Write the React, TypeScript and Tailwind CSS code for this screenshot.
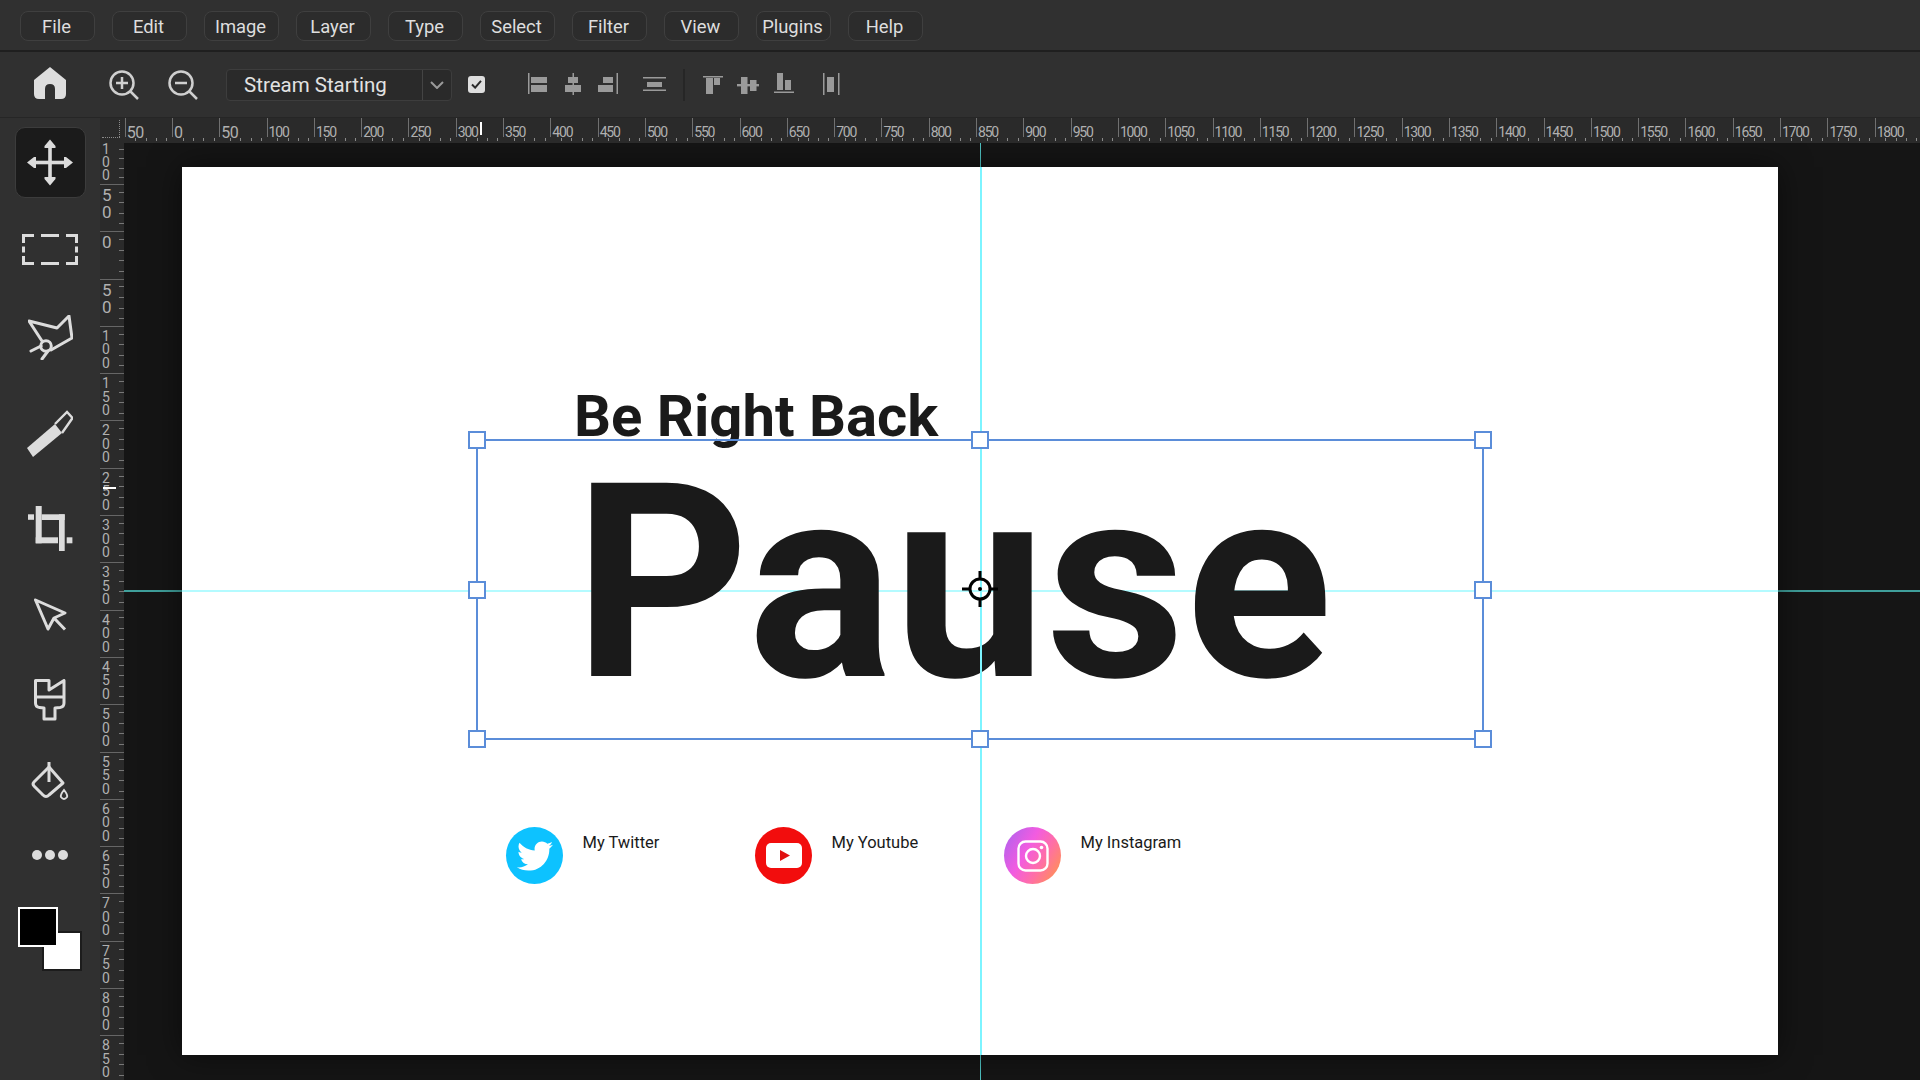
import { FaTwitter } from "react-icons/fa";

const menus = ["File", "Edit", "Image", "Layer", "Type", "Select", "Filter", "View", "Plugins", "Help"];
const topLabels = Array.from({ length: 38 }, (_, i) => (i === 0 ? 50 : (i - 1) * 50));
const sideLabels = [100, 50, 0, ...Array.from({ length: 17 }, (_, i) => (i + 1) * 50)];

const handles = [
  "left-[-1px] top-[-1px]",
  "left-1/2 top-[-1px]",
  "left-[calc(100%+1px)] top-[-1px]",
  "left-[-1px] top-1/2",
  "left-[calc(100%+1px)] top-1/2",
  "left-[-1px] top-[calc(100%+1px)]",
  "left-1/2 top-[calc(100%+1px)]",
  "left-[calc(100%+1px)] top-[calc(100%+1px)]",
];

function Bars({ className, children }: { className: string; children: React.ReactNode }) {
  return (
    <svg viewBox="0 0 24 24" className={`h-[24px] w-[24px] shrink-0 ${className}`} fill="#9a9a9a">
      {children}
    </svg>
  );
}

function MoveIcon() {
  return (
    <svg viewBox="0 0 46 47" className="h-[47px] w-[46px]" fill="#dcdcdc">
      <rect x="21.2" y="6" width="3.6" height="35" />
      <rect x="6" y="21.7" width="34" height="3.6" />
      <path d="M23 0.5 L28.5 7 V9 H17.5 V7 Z M23 46.5 L28.5 40 V38 H17.5 V40 Z M0 23.5 L7 18 H9 V29 H7 Z M46 23.5 L39 18 H37 V29 H39 Z" />
    </svg>
  );
}

function MarqueeIcon() {
  return (
    <svg viewBox="0 0 56 31" className="h-[31px] w-[56px]" fill="none" stroke="#dcdcdc" strokeWidth="3">
      <path d="M1.5 9V1.5H12M19 1.5H37M44 1.5H54.5V9M1.5 12.5V18.5M54.5 12.5V18.5M1.5 22V29.5H12M19 29.5H37M44 29.5H54.5V22" />
    </svg>
  );
}

function PenIcon() {
  return (
    <svg viewBox="0 0 45 45" className="h-[45px] w-[45px]" fill="none" stroke="#dcdcdc" strokeWidth="3">
      <path d="M14 26 L1 6 L29 13 L41 1 L44 23 L23 35 M3 36 L13 31 M14 44 L20 36" strokeLinejoin="round" strokeLinecap="round" />
      <circle cx="18" cy="31" r="5.3" />
    </svg>
  );
}

function BrushIcon() {
  return (
    <svg viewBox="0 0 46 47" className="h-[47px] w-[46px]">
      <path d="M0 38 L6 47 L35 23 L28 14 Z" fill="#dcdcdc" />
      <path d="M28 14 L40 2 L45.5 8 L35 23" fill="none" stroke="#dcdcdc" strokeWidth="2.4" />
    </svg>
  );
}

function CropIcon() {
  return (
    <svg viewBox="0 0 45 45" className="h-[45px] w-[45px]" fill="#dcdcdc">
      <rect x="0" y="8.3" width="6" height="5.5" />
      <rect x="7.7" y="0" width="6" height="37.3" />
      <rect x="7.7" y="31.3" width="22.3" height="6" />
      <rect x="13.7" y="8.3" width="23" height="5.7" />
      <rect x="31" y="8.3" width="5.7" height="36.7" />
      <rect x="38.7" y="31.3" width="5.7" height="6" />
    </svg>
  );
}

function ArrowIcon() {
  return (
    <svg viewBox="0 0 33 33" className="h-[33px] w-[33px]" fill="none" stroke="#dcdcdc" strokeWidth="3">
      <path d="M1.5 2 L31 15 L20 20 L14 31 Z M20 20 L31 31.5" strokeLinejoin="round" />
    </svg>
  );
}

function PaintIcon() {
  return (
    <svg viewBox="0 0 32 42" className="h-[42px] w-[32px]" fill="none" stroke="#dcdcdc" strokeWidth="3">
      <path d="M1.5 1.5 H15 V11 L30 1.5 V24 Q30 28 26 28.5 L21 29 V40 H10 V29 L5.5 28.5 Q1.5 28 1.5 24 Z M1.5 18 H30" strokeLinejoin="round" />
    </svg>
  );
}

function BucketIcon() {
  return (
    <svg viewBox="10 10 40 42" className="h-[42px] w-[40px]" fill="none" stroke="#dcdcdc" strokeWidth="3">
      <path d="M29 17 L14 32 Q12 34 14 36 L23 45 Q26 48 29 45 L43 33 L29 17 Z" strokeLinejoin="round" />
      <path d="M29 12 V32" />
      <path d="M44 40 Q48 45 47 47 Q44 51 41 47 Q40 45 44 40 Z" strokeWidth="2" />
    </svg>
  );
}

function Social({ name, children }: { name: string; children: React.ReactNode }) {
  return (
    <div className="flex w-[249px] items-start gap-[19.5px]">
      {children}
      <span className="mt-[4px] text-[16.5px] leading-[24px] text-[#1a1a1a]">{name}</span>
    </div>
  );
}

export default function App() {
  return (
    <div className="flex h-screen w-screen flex-col overflow-hidden bg-[#303030] font-['Roboto',sans-serif]">
      <div className="flex h-[52px] shrink-0 items-start gap-[17px] border-b-2 border-[#1f1f1f] bg-[#303030] pl-[20px] pt-[11px]">
        {menus.map((m) => (
          <div
            key={m}
            className="flex h-[30px] w-[75px] items-center justify-center rounded-[8px] border border-[#3f3f3f] bg-[#2c2c2c] pr-[2px] pt-[2px] text-[18.4px] text-[#dedede]"
          >
            {m}
          </div>
        ))}
      </div>

      <div className="flex h-[66px] shrink-0 items-center border-b border-[#262626] bg-[#303030]">
        <svg viewBox="0 0 32 32" className="-mt-[3px] ml-[34px] h-[32px] w-[32px] shrink-0" fill="#dedede">
          <path d="M16 0 L32 13 V27 Q32 32 27 32 H21 V22 Q21 17 16 17 Q11 17 11 22 V32 H5 Q0 32 0 27 V13 Z" />
        </svg>
        <svg viewBox="0 0 32 32" className="ml-[42px] h-[32px] w-[32px] shrink-0" fill="none" stroke="#cfcfcf" strokeWidth="2.5">
          <circle cx="14" cy="14" r="11.5" />
          <path d="M22.5 22.5 L30 30 M8 14 H20 M14 8 V20" />
        </svg>
        <svg viewBox="0 0 32 32" className="ml-[27px] h-[32px] w-[32px] shrink-0" fill="none" stroke="#cfcfcf" strokeWidth="2.5">
          <circle cx="14" cy="14" r="11.5" />
          <path d="M22.5 22.5 L30 30 M8 14 H20" />
        </svg>
        <div className="ml-[27px] flex h-[32px] w-[226px] shrink-0 items-center rounded-[4px] border border-[#3d3d3d] bg-[#2a2a2a]">
          <span className="w-[195px] pl-[17px] pt-px text-[20.5px] text-[#e2e2e2]">Stream Starting</span>
          <div className="flex h-full flex-1 items-center justify-center border-l border-[#444]">
            <svg viewBox="0 0 14 8" className="h-[8px] w-[14px]" fill="none" stroke="#9a9a9a" strokeWidth="2">
              <path d="M1 1 L7 7 L13 1" />
            </svg>
          </div>
        </div>
        <div className="ml-[16px] flex h-[17px] w-[17px] shrink-0 items-center justify-center rounded-[3px] bg-[#dedede]">
          <svg viewBox="0 0 12 10" className="h-[9px] w-[11px]" fill="none" stroke="#2a2a2a" strokeWidth="2.2">
            <path d="M1 5 L4.5 8.5 L11 1" />
          </svg>
        </div>
        <Bars className="ml-[41px]">
          <rect x="2" y="0" width="1.5" height="21" />
          <rect x="5" y="4" width="16" height="6" />
          <rect x="5" y="12" width="16" height="7" />
        </Bars>
        <Bars className="ml-[11px]">
          <rect x="11.5" y="0" width="1.5" height="22" />
          <rect x="7" y="4" width="10" height="6" />
          <rect x="4" y="12" width="16" height="7" />
        </Bars>
        <Bars className="ml-[11px]">
          <rect x="20.5" y="0" width="1.5" height="21" />
          <rect x="7" y="4" width="10" height="6" />
          <rect x="2" y="12" width="15" height="7" />
        </Bars>
        <Bars className="ml-[22px]">
          <rect x="1" y="4" width="23" height="1.5" />
          <rect x="5" y="9" width="15" height="5" />
          <rect x="1" y="16.5" width="23" height="1.5" />
        </Bars>
        <div className="ml-[17px] h-[32px] w-[2px] shrink-0 bg-[#262626]" />
        <Bars className="ml-[16px]">
          <rect x="2" y="3" width="20" height="1.5" />
          <rect x="5" y="5" width="7" height="16" />
          <rect x="13" y="5" width="6" height="7" />
        </Bars>
        <Bars className="ml-[11px]">
          <rect x="1" y="11" width="22" height="2.4" />
          <rect x="5" y="4" width="6.5" height="17" />
          <rect x="14" y="7" width="6.5" height="11" />
        </Bars>
        <Bars className="ml-[12px]">
          <rect x="2" y="18.5" width="20" height="1.5" />
          <rect x="5" y="0" width="6" height="17" />
          <rect x="13" y="7" width="6" height="10" />
        </Bars>
        <Bars className="ml-[23px]">
          <rect x="4" y="0" width="1.5" height="22" />
          <rect x="19" y="0" width="1.5" height="22" />
          <rect x="8" y="4" width="7" height="15" />
        </Bars>
      </div>

      <div className="flex min-h-0 flex-1">
        <div className="flex w-[100px] shrink-0 flex-col items-center bg-[#303030]">
          <div className="mt-[9px] flex h-[71px] w-[71px] items-center justify-center rounded-[10px] border border-[#3c3c3c] bg-[#1b1b1b]">
            <MoveIcon />
          </div>
          <div className="mt-[36px]">
            <MarqueeIcon />
          </div>
          <div className="mt-[50px]">
            <PenIcon />
          </div>
          <div className="mt-[50px] h-[47px]">
            <BrushIcon />
          </div>
          <div className="mt-[49px] h-[45px]">
            <CropIcon />
          </div>
          <div className="mt-[47px] h-[33px]">
            <ArrowIcon />
          </div>
          <div className="mt-[48px] h-[42px]">
            <PaintIcon />
          </div>
          <div className="mt-[39px] h-[42px]">
            <BucketIcon />
          </div>
          <div className="mt-[48px] flex h-[11px] gap-[3px]">
            <span className="h-[10px] w-[10px] rounded-full bg-[#dcdcdc]" />
            <span className="h-[10px] w-[10px] rounded-full bg-[#dcdcdc]" />
            <span className="h-[10px] w-[10px] rounded-full bg-[#dcdcdc]" />
          </div>
          <div className="relative mt-[46px] h-[64px] w-[64px]">
            <div className="absolute left-[24px] top-[24px] h-[40px] w-[40px] border-2 border-[#1c1c1c] bg-white" />
            <div className="absolute left-0 top-0 h-[40px] w-[40px] border-2 border-white bg-black" />
          </div>
        </div>

        <div className="flex min-w-0 flex-1 flex-col">
          <div className="flex h-[25px] shrink-0 overflow-hidden bg-[#2a2a2a]">
            <div className="relative w-[24.7px] shrink-0">
              <div className="absolute left-[19px] top-[2px] h-[17px] border-l border-dotted border-[#8a8a8a]" />
              <div className="absolute left-[2px] top-[19px] w-[18px] border-t border-dotted border-[#8a8a8a]" />
            </div>
            {topLabels.map((n, i) => (
              <div key={i} className="relative w-[47.3px] shrink-0">
                <div className="absolute left-0 top-0 h-[19px] w-px bg-[#707070]" />
                <div
                  className={
                    n < 100
                      ? "pl-[2px] pt-[7px] text-[16px] leading-[15px] tracking-[-0.5px] text-[#b0b0b0]"
                      : "pl-[2px] pt-[8px] text-[14px] leading-[13px] tracking-[-1.2px] text-[#b0b0b0]"
                  }
                >
                  {n}
                </div>
                <div className="absolute bottom-[2px] left-[6px] right-0 flex h-[3px] justify-around">
                  <span className="h-[3px] w-px bg-[#8a8a8a]" />
                  <span className="h-[3px] w-px bg-[#8a8a8a]" />
                  <span className="h-[3px] w-px bg-[#8a8a8a]" />
                  <span className="h-[3px] w-px bg-[#8a8a8a]" />
                </div>
              </div>
            ))}
            <div className="absolute left-[480px] top-[122px] h-[13px] w-[2px] bg-white" />
          </div>

          <div className="flex min-h-0 flex-1">
            <div className="w-[24px] shrink-0 overflow-hidden bg-[#2a2a2a]">
              {sideLabels.map((n, i) => (
                <div
                  key={i}
                  className={
                    i === 0
                      ? "flex h-[41px] justify-between pl-[2px]"
                      : "flex h-[47.3px] justify-between border-t border-[#666] pl-[2px]"
                  }
                >
                  <div
                    className={
                      i === 0
                        ? "flex flex-col text-[14px] leading-[13px] text-[#b0b0b0]"
                        : n < 100
                          ? "flex flex-col pt-[2px] text-[17px] leading-[17px] text-[#b0b0b0]"
                          : "flex flex-col pt-[3px] text-[14px] leading-[13.5px] text-[#b0b0b0]"
                    }
                  >
                    {String(n)
                      .split("")
                      .map((d, j) => (
                        <span key={j}>{d}</span>
                      ))}
                  </div>
                  <div className="flex flex-col justify-around py-[2px]">
                    <span className="h-px w-[5px] bg-[#777]" />
                    <span className="h-px w-[5px] bg-[#777]" />
                    <span className="h-px w-[5px] bg-[#777]" />
                    <span className="h-px w-[5px] bg-[#777]" />
                  </div>
                </div>
              ))}
            </div>

            <div className="relative min-w-0 flex-1 overflow-hidden bg-[#151515] pl-[58px] pt-[24px]">
              <div className="absolute left-[855.5px] top-0 h-full w-px bg-[#4fc4c4]" />
              <div className="absolute left-0 top-[447px] h-[1.5px] w-full bg-[#3f9f9b]" />

              <div className="relative h-[888px] w-[1596px] bg-white shadow-[0_0_30px_rgba(0,0,0,0.5)]">
                <div className="absolute left-0 top-[423px] h-[2px] w-full bg-[#b4fbff]" />
                <div className="absolute left-[392px] top-[220px] text-[58px] font-bold leading-none text-[#1a1a1a]">
                  Be Right Back
                </div>
                <div className="absolute left-[392px] top-[280px] text-[272px] font-bold leading-none text-[#1a1a1a]">
                  Pause
                </div>
                <div className="absolute left-[797.5px] top-0 h-full w-[2px] bg-[#7df4ff]" />
                <div className="absolute left-[324px] top-[660px] flex">
                  <Social name="My Twitter">
                    <div className="flex h-[57px] w-[57px] shrink-0 items-center justify-center rounded-full bg-[#0dc2ff]">
                      <FaTwitter className="h-[36px] w-[36px] text-white" />
                    </div>
                  </Social>
                  <Social name="My Youtube">
                    <div className="flex h-[57px] w-[57px] shrink-0 items-center justify-center rounded-full bg-[#f20d0d]">
                      <svg viewBox="0 0 36 25" className="h-[25px] w-[36px]">
                        <rect width="36" height="25" rx="5" fill="#fff" />
                        <path d="M14 7 L24 12.5 L14 18 Z" fill="#e01010" />
                      </svg>
                    </div>
                  </Social>
                  <Social name="My Instagram">
                    <div className="flex h-[57px] w-[57px] shrink-0 items-center justify-center rounded-full bg-[linear-gradient(120deg,#a763f0_0%,#f25ce0_40%,#ff6fa5_65%,#ff9a3d_100%)]">
                      <svg viewBox="0 0 32 32" className="h-[32px] w-[32px]" fill="none" stroke="#fff" strokeWidth="2.4">
                        <rect x="1.5" y="1.5" width="29" height="29" rx="7" />
                        <circle cx="16" cy="16" r="7" />
                        <circle cx="24.5" cy="7.5" r="1.8" fill="#fff" stroke="none" />
                      </svg>
                    </div>
                  </Social>
                </div>
              </div>

              <div className="absolute left-[352px] top-[296px] h-[301px] w-[1008px] border-2 border-[#5b8dd9]">
                {handles.map((h) => (
                  <div
                    key={h}
                    className={`absolute h-[18px] w-[18px] -translate-x-1/2 -translate-y-1/2 border-2 border-[#5b8dd9] bg-white ${h}`}
                  />
                ))}
              </div>

              <svg viewBox="0 0 36 36" className="absolute left-[838px] top-[428px] h-[36px] w-[36px]" fill="none" stroke="#000" strokeWidth="3">
                <circle cx="18" cy="18" r="10" />
                <path d="M18 0 V8 M18 28 V36 M0 18 H8 M28 18 H36" />
                <circle cx="18" cy="18" r="2" fill="#000" stroke="none" />
              </svg>
            </div>
          </div>
        </div>
      </div>
      <div className="absolute left-[103px] top-[487px] h-[1.5px] w-[13px] bg-white" />
    </div>
  );
}
